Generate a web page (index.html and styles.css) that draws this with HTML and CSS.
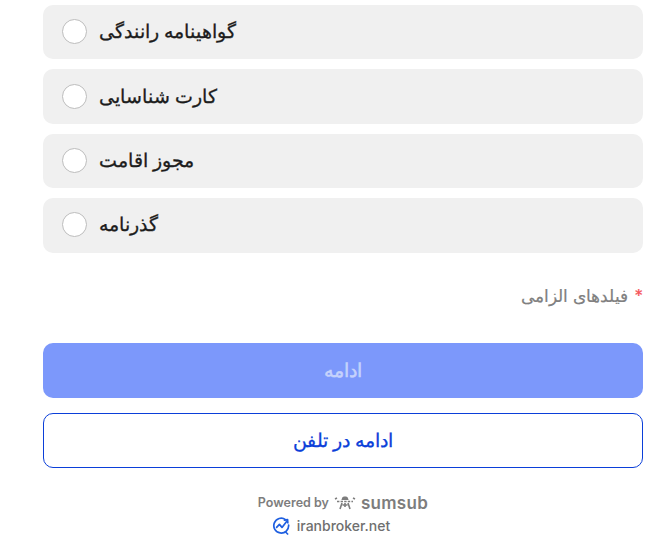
FILE: index.html
```html
<!DOCTYPE html>
<html>

<head>
    <title>Documents</title>
    <link rel="stylesheet" href="styles.css">
</head>

<body>

    <div class="container">
        <div class="options">
            <label class="option"><span class="radio"></span><span class="option-text" dir="rtl">گواهینامه رانندگی</span></label>
            <label class="option"><span class="radio"></span><span class="option-text" dir="rtl">کارت شناسایی</span></label>
            <label class="option"><span class="radio"></span><span class="option-text" dir="rtl">مجوز اقامت</span></label>
            <label class="option"><span class="radio"></span><span class="option-text" dir="rtl">گذرنامه</span></label>
        </div>

        <p class="required" dir="rtl"><span class="star">*</span> فیلدهای الزامی</p>

        <button class="continue-btn">ادامه</button>
        <button class="phone-btn">ادامه در تلفن</button>

        <div class="powered">
            <span>Powered by</span>
            <svg class="sumsub-icon" width="22" height="16" viewBox="0 0 22 16" fill="none" stroke="#7d7d7d" stroke-width="1.6">
                <path d="M8 3.2 C8 1 14 1 14 3.2 L14.6 5 H7.4 Z" fill="#7d7d7d" stroke="none"/>
                <path d="M3 6.5 H19" stroke-dasharray="2.4 1.2"/>
                <path d="M8 8 L6 14 M14 8 L16 14 M11 8 V12 M8.5 10 H13.5"/>
                <path d="M1 4 L3 3 M21 4 L19 3"/>
            </svg>
            <span class="sumsub">sumsub</span>
        </div>

        <div class="broker">
            <svg width="19" height="18" viewBox="0 0 19 18" fill="none" stroke="#1f5fe0" stroke-width="1.7" stroke-linecap="round" stroke-linejoin="round">
                <path d="M13.5 2.6 A7.4 7.4 0 1 0 16.6 8"/>
                <path d="M4.6 10.4 L7.4 7.4 L10 10.4 L14.8 4.2"/>
                <path d="M12.4 3.2 L15.6 2.6 L15.8 5.8"/>
                <path d="M13.6 15 L15.6 17"/>
            </svg>
            <span>iranbroker.net</span>
        </div>
    </div>

</body>

</html>
```

FILE: styles.css
```css
html,
body {
    margin: 0;
    height: 541px;
    overflow: hidden;
    background-color: #fff;
}

body {
    font-family: Inter, sans-serif;
}

.container {
    margin-top: -1px;
    padding: 6px 17px 0 43px;
    display: flex;
    flex-direction: column;
}

.options {
    display: flex;
    flex-direction: column;
    gap: 10px;
}

.option {
    display: flex;
    align-items: center;
    gap: 12px;
    height: 54.4px;
    padding-left: 19px;
    padding-bottom: 1px;
    box-sizing: border-box;
    background-color: #f0f0f0;
    border-radius: 10px;
}

.radio {
    width: 25px;
    height: 25px;
    box-sizing: border-box;
    background-color: #fff;
    border: 1px solid #bdbdbd;
    border-radius: 50%;
}

.option-text {
    font-size: 19px;
    color: #1c1c1c;
    -webkit-text-stroke: 0.3px #1c1c1c;
}

.required {
    margin: 32px 0 0;
    height: 22px;
    font-size: 17px;
    line-height: 22px;
    color: #808080;
    -webkit-text-stroke: 0.2px #808080;
}

.star {
    margin-left: 2px;
    color: #f5545a;
    -webkit-text-stroke: 0.2px #f5545a;
}

.continue-btn,
.phone-btn {
    width: 100%;
    height: 55px;
    font-family: inherit;
    font-size: 19.4px;
    border-radius: 10px;
    box-sizing: border-box;
}

.continue-btn {
    margin-top: 36px;
    border: none;
    background-color: #7c98fb;
    color: #c6d2fb;
    -webkit-text-stroke: 0.5px #c6d2fb;
}

.phone-btn {
    margin-top: 15px;
    background-color: #fff;
    border: 1px solid #0b3fd9;
    color: #0b3fd9;
    -webkit-text-stroke: 0.3px #0b3fd9;
}

.powered {
    margin-top: 25px;
    display: flex;
    justify-content: center;
    align-items: center;
    gap: 5px;
    height: 20px;
    font-size: 12.5px;
    font-weight: 600;
    color: #7d7d7d;
}

.sumsub {
    font-size: 17px;
    font-weight: 600;
    letter-spacing: 0.3px;
    line-height: 20px;
}

.broker {
    margin-top: 2px;
    margin-right: 24px;
    display: flex;
    justify-content: center;
    align-items: center;
    gap: 6px;
    height: 22px;
    font-size: 14px;
    font-weight: 500;
    color: #6f6f6f;
}
```
